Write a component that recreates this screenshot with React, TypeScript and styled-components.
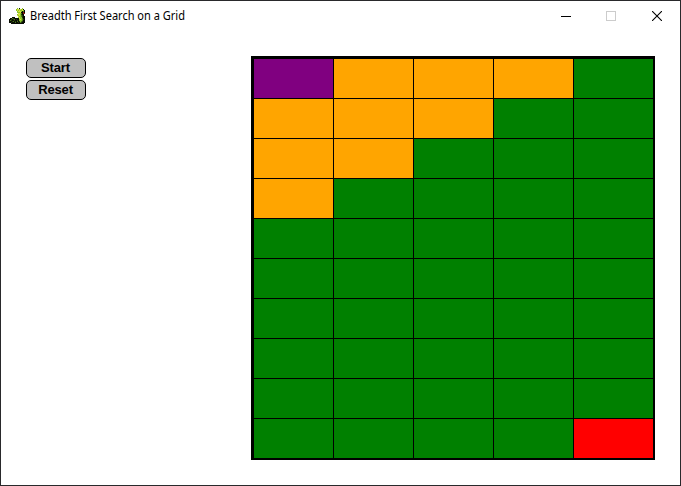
import React from "react";
import styled, { createGlobalStyle } from "styled-components";

const GlobalStyle = createGlobalStyle`
  body { margin: 0; background: #fff; }
  * { box-sizing: border-box; }
`;

const Window = styled.div`
  width: 681px;
  height: 486px;
  display: flex;
  flex-direction: column;
  background: #fff;
  border: 1px solid #29292b;
  overflow: hidden;
`;

const TitleBar = styled.header`
  height: 30px;
  flex: none;
  display: flex;
  align-items: center;
  padding-left: 8px;
`;

const SnakeIcon = styled.svg`
  width: 16px;
  height: 16px;
  flex: none;
`;

const Title = styled.h1`
  flex: 1;
  margin: 0 0 0 5px;
  font-size: 12px;
  line-height: 16px;
`;

const TitleText = styled.text`
  font: 400 12px "Noto Sans", sans-serif;
  fill: #000;
`;

const TitleSvg = styled.svg`
  display: block;
  width: 200px;
  height: 16px;
`;

const CaptionButtons = styled.div`
  display: flex;
  flex: none;
`;

const CaptionButton = styled.button<{ $muted?: boolean }>`
  width: 46px;
  height: 30px;
  display: grid;
  place-items: center;
  padding: 0;
  border: 0;
  background: transparent;
  color: ${(p) => (p.$muted ? "#ccc" : "#000")};
`;

const Content = styled.main`
  display: flex;
  align-items: flex-start;
  padding: 25px 0 0 25px;
`;

const Controls = styled.div`
  width: 225px;
  display: flex;
  flex-direction: column;
  gap: 2px;
  padding-top: 2px;
`;

const ActionButton = styled.button`
  width: 60px;
  height: 20px;
  padding: 0 1px 1px 0;
  border: 1px solid #000;
  border-radius: 5px;
  background: #c0c0c0;
  color: #000;
  font: 700 13px/17px "Liberation Sans", Arial, sans-serif;
  letter-spacing: -0.15px;
  text-align: center;
`;

const Board = styled.div`
  display: grid;
  grid-template-columns: repeat(5, 79px);
  grid-template-rows: repeat(10, 39px);
  gap: 1px;
  padding: 3px 2px 2px 3px;
  background: #000;
`;

type CellKind = "start" | "frontier" | "open" | "goal";

const cellColors: Record<CellKind, string> = {
  start: "#800080",
  frontier: "#ffa500",
  open: "#008000",
  goal: "#ff0000",
};

const Cell = styled.div<{ $kind: CellKind }>`
  background: ${(p) => cellColors[p.$kind]};
`;

const snakeColors: Record<string, string> = {
  k: "#080c04",
  d: "#24380c",
  g: "#4c7a18",
  l: "#8cc428",
  y: "#d8e03c",
  r: "#8c1c14",
};

const snake = [
  "........l.k..l..",
  ".......lyylylyk.",
  ".......lylyllylk",
  "........lyyylkgk",
  "........lllykkrk",
  ".........yylgkrr",
  "........lyyldkk.",
  "........ylylgdk.",
  ".........yllgdkk",
  "...kkk...lylldkk",
  ".kkgdkkkkkyllgkk",
  "kkdkdgkdkklylgdk",
  "kgdkkdkkdklllgkk",
  "kkkdgkdkgkdlgdkk",
  "kkdkkkgkkdkgdkkk",
  "..kkkkkkkkkkkkk.",
];

const cells: CellKind[] = Array.from({ length: 50 }, (_, i) => {
  if (i === 0) return "start";
  if (i === 49) return "goal";
  return Math.floor(i / 5) + (i % 5) < 4 ? "frontier" : "open";
});

export default function App() {
  return (
    <>
      <GlobalStyle />
      <Window>
        <TitleBar>
          <SnakeIcon viewBox="0 0 16 16" shapeRendering="crispEdges" aria-hidden="true">
            {snake.flatMap((row, y) =>
              [...row].map((c, x) =>
                c === "." ? null : (
                  <rect key={`${x}-${y}`} x={x} y={y} width="1" height="1" fill={snakeColors[c]} />
                ),
              ),
            )}
          </SnakeIcon>
          <Title>
            <TitleSvg>
              <TitleText x="0" y="12" textLength="155" lengthAdjust="spacingAndGlyphs">
                Breadth First Search on a Grid
              </TitleText>
            </TitleSvg>
          </Title>
          <CaptionButtons>
            <CaptionButton aria-label="Minimize">
              <svg width="12" height="10" shapeRendering="crispEdges">
                <path d="M2 5.5H12" stroke="currentColor" />
              </svg>
            </CaptionButton>
            <CaptionButton aria-label="Maximize" $muted disabled>
              <svg width="10" height="10" shapeRendering="crispEdges">
                <rect x="0.5" y="0.5" width="9" height="9" fill="none" stroke="currentColor" />
              </svg>
            </CaptionButton>
            <CaptionButton aria-label="Close">
              <svg width="10" height="10">
                <path d="M0 0L10 10M10 0L0 10" stroke="currentColor" strokeWidth="1.1" />
              </svg>
            </CaptionButton>
          </CaptionButtons>
        </TitleBar>
        <Content>
          <Controls>
            <ActionButton>Start</ActionButton>
            <ActionButton>Reset</ActionButton>
          </Controls>
          <Board>
            {cells.map((kind, i) => (
              <Cell key={i} $kind={kind} />
            ))}
          </Board>
        </Content>
      </Window>
    </>
  );
}
